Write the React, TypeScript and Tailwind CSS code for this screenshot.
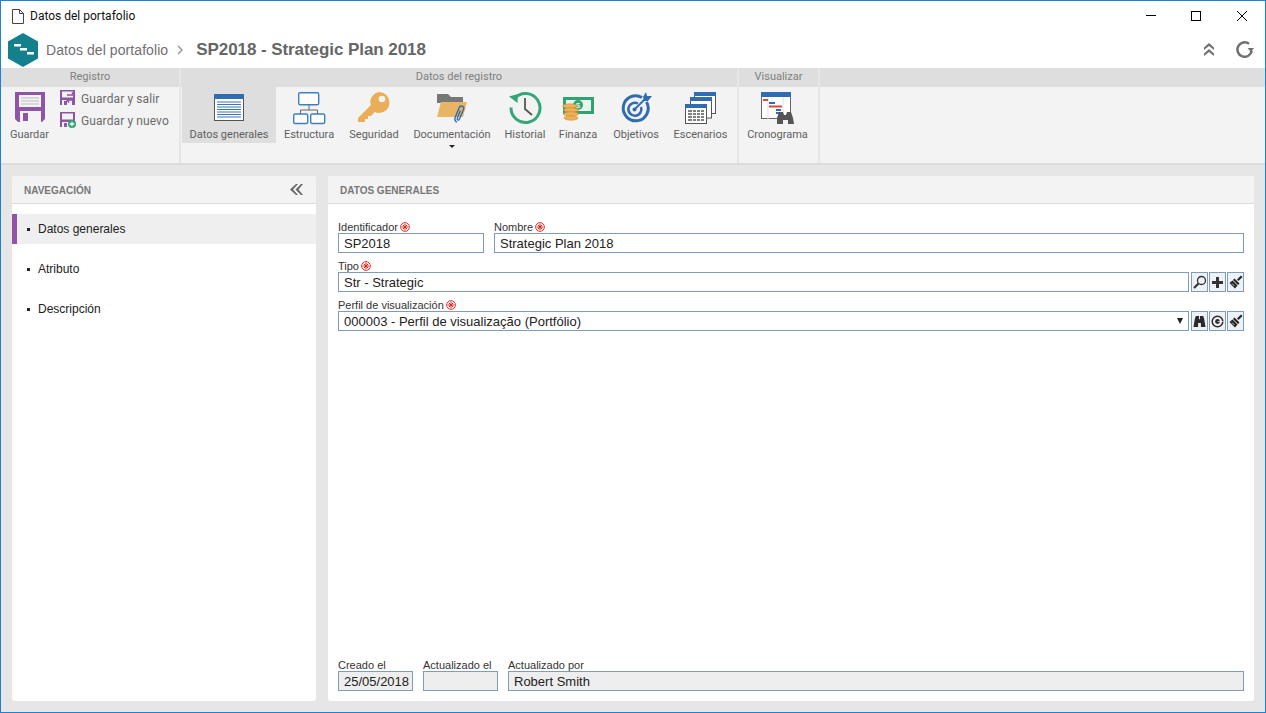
import type { ReactNode } from 'react';

const Req = () => (
  <svg viewBox="0 0 10 10" className="mb-[2px] ml-[2px] h-[10px] w-[10px] shrink-0">
    <circle cx="5" cy="5" r="4.4" fill="#fff" stroke="#e0241b" strokeWidth="0.9" />
    <path d="M5 1.500v7M1.500 5h7M2.800 2.800l4.400 4.400M7.200 2.800l-4.400 4.400" stroke="#e0241b" strokeWidth="1" />
  </svg>
);

const SaveIcon = () => (
  <svg viewBox="0 0 30 30" className="h-[30px] w-[30px]">
    <path d="M0 0h30v27l-3 3H3l-3-3z" fill="#8e54a5" />
    <rect x="4" y="3" width="22" height="12" fill="#f3f3f3" />
    <path d="M6 6h18M6 9h18M6 12h18" stroke="#b9b9c4" strokeWidth="1" />
    <rect x="5" y="19" width="21" height="11" fill="#f3f3f3" />
    <rect x="8" y="21" width="5" height="8" fill="#8e54a5" />
  </svg>
);

const SmallSave = ({ plus }: { plus?: boolean }) => (
  <svg viewBox="0 0 16 16" className="h-4 w-4">
    <path d="M0 0h15v15H0z" fill="#8e54a5" />
    <rect x="2" y="1.5" width="11" height="6" fill="#f3f3f3" />
    <rect x="2" y="10" width="10" height="5" fill="#f3f3f3" />
    <rect x="4" y="11" width="3" height="4" fill="#8e54a5" />
    {plus ? (
      <>
        <circle cx="12" cy="12" r="4" fill="#2fa36f" />
        <path d="M12 9.700v4.600M9.700 12h4.600" stroke="#fff" strokeWidth="1.300" />
      </>
    ) : (
      <path d="M7 5h7l-2-2.500M14 10H7l2 2.500" fill="none" stroke="#8e54a5" strokeWidth="1.500" />
    )}
  </svg>
);

const GeneralIcon = () => (
  <svg viewBox="0 0 30 27" className="h-[27px] w-[30px]">
    <rect x="0.500" y="0.500" width="29" height="26" fill="#fff" stroke="#555" />
    <rect x="0" y="0" width="30" height="5" fill="#2f6cb0" />
    <path d="M3 8h24M3 10.500h24M3 13h24M3 15.500h24M3 18h24M3 20.500h24M3 23h24" stroke="#3c74b6" strokeWidth="1" />
  </svg>
);

const StructureIcon = () => (
  <svg viewBox="0 0 34 34" className="h-[34px] w-[34px]">
    <g fill="#fff" stroke="#3d7fc0" strokeWidth="1.400">
      <rect x="6.700" y="1.700" width="20" height="12" rx="1.500" />
      <rect x="1.700" y="23" width="14" height="9.500" rx="1.500" />
      <rect x="18.700" y="23" width="14" height="9.500" rx="1.500" />
    </g>
    <path d="M17 14v5M8.500 23v-4h17v4" fill="none" stroke="#666" strokeWidth="1" />
  </svg>
);

const KeyIcon = () => (
  <svg viewBox="0 0 34 34" className="h-[34px] w-[34px]">
    <path
      d="M22 1a10.500 10.500 0 0 1 0 21c-1.500 0-3-.4-4.300-1L14 25h-3v3H8v3H1v-4l13-13c-.5-1.200-.8-2.500-.8-3.700A10.500 10.500 0 0 1 22 1z"
      fill="#e9ae57"
    />
    <circle cx="25" cy="8" r="3.300" fill="#f3f3f3" />
  </svg>
);

const FolderIcon = () => (
  <svg viewBox="0 0 32 32" className="h-[32px] w-[32px]">
    <path d="M1 2h11l3 3h12v6H1z" fill="#777" />
    <path d="M1 24V9h3v-1H1z" fill="#777" />
    <path d="M1 25 5 10h26l-4 15z" fill="#e9b463" />
    <path
      d="M21 30c-2-.5-2.500-2-2-4l4-10c.7-1.800 2-2.300 3.300-1.800 1.400.6 1.800 1.900 1.200 3.300l-4 9.500c-.4 1-1 1.300-1.700 1-.7-.3-.8-.9-.4-1.900l3-7.500"
      fill="none"
      stroke="#2f6cb0"
      strokeWidth="1.400"
    />
  </svg>
);

const HistoryIcon = () => (
  <svg viewBox="0 0 33 33" className="h-[33px] w-[33px]">
    <path d="M5.500 7.500A14.500 14.500 0 1 1 2 16.500" fill="none" stroke="#35a67a" strokeWidth="3" />
    <path d="M0 5.500 9 3l-.5 9z" fill="#35a67a" />
    <path d="M16 7v11l7 6" fill="none" stroke="#555" strokeWidth="1.800" />
  </svg>
);

const MoneyIcon = () => (
  <svg viewBox="0 0 34 30" className="h-[30px] w-[34px]">
    <rect x="2" y="4" width="31" height="17" fill="#2fa36f" />
    <rect x="5" y="7" width="25" height="11" fill="#eaf5ef" />
    <circle cx="17" cy="12" r="5" fill="#2fa36f" />
    <text x="17" y="15" textAnchor="middle" fontSize="8" fill="#fff" fontFamily="Liberation Sans">$</text>
    <g fill="#eeb156" stroke="#c98d36" strokeWidth="0.600">
      <ellipse cx="9" cy="13" rx="7.500" ry="2.200" />
      <ellipse cx="10" cy="17" rx="7.500" ry="2.200" />
      <ellipse cx="10" cy="21" rx="7.500" ry="2.200" />
      <ellipse cx="10" cy="25" rx="7" ry="2.200" />
    </g>
  </svg>
);

const TargetIcon = () => (
  <svg viewBox="0 0 32 32" className="h-[32px] w-[32px]">
    <g fill="none" stroke="#2f6cb0">
      <path d="M22 5.500A12.500 12.500 0 1 0 26.500 10" strokeWidth="3" />
      <path d="M18 11.500A6.500 6.500 0 1 0 21 15" strokeWidth="2.500" />
    </g>
    <circle cx="14.500" cy="17.500" r="2" fill="#2f6cb0" />
    <path d="M14.500 17.500 26 6" stroke="#2f6cb0" strokeWidth="1.800" />
    <path d="m23 5 3-5 1 4 5 0-4 5-4 0z" fill="#2f6cb0" />
  </svg>
);

const ScenarioIcon = () => (
  <svg viewBox="0 0 32 32" className="h-[32px] w-[32px]">
    <rect x="9.500" y="0.500" width="21" height="21" fill="#fff" stroke="#555" />
    <rect x="9" y="0" width="22" height="4" fill="#2f6cb0" />
    <rect x="5.500" y="6" width="21" height="20" fill="#fff" stroke="#555" />
    <rect x="5" y="5" width="22" height="4" fill="#2f6cb0" />
    <rect x="0.500" y="12.500" width="21" height="19" fill="#fff" stroke="#555" />
    <rect x="0" y="12" width="22" height="4" fill="#2f6cb0" />
    <path d="M3 19h16M3 22h16M3 25h16M3 28h16" stroke="#555" strokeWidth="1.500" />
    <path d="M7.500 18v11M11.500 18v11M15.500 18v11" stroke="#fff" strokeWidth="1" />
  </svg>
);

const GanttIcon = () => (
  <svg viewBox="0 0 34 32" className="h-[32px] w-[34px]">
    <rect x="0.500" y="0.500" width="29" height="26" fill="#fff" stroke="#666" />
    <rect x="0" y="0" width="30" height="5" fill="#2f6cb0" />
    <path d="M7 5v22M22 5v22" stroke="#ddd" />
    <rect x="2" y="7" width="5" height="2" fill="#d9483b" />
    <rect x="8" y="10" width="6" height="2" fill="#2f6cb0" />
    <rect x="8" y="13.500" width="13" height="2" fill="#d9483b" />
    <rect x="15" y="17" width="5" height="2" fill="#2f6cb0" />
    <rect x="15" y="20" width="3" height="2" fill="#2f6cb0" />
    <path d="M16 32v-6l2-6h4l1 3h2l1-3h4l2 6 1 6h-6v-4h-5v4z" fill="#555" />
  </svg>
);

const Lens = () => (
  <svg viewBox="0 0 14 14" className="h-[14px] w-[14px]">
    <circle cx="8.500" cy="5.500" r="4" fill="none" stroke="#333" strokeWidth="1.300" />
    <path d="M5.500 8.500 1 13" stroke="#333" strokeWidth="2.200" />
  </svg>
);

const PlusIcon = () => (
  <svg viewBox="0 0 11 11" className="h-[11px] w-[11px]">
    <path d="M4 0h3v4h4v3H7v4H4V7H0V4h4z" fill="#333" />
  </svg>
);

const Binoculars = () => (
  <svg viewBox="0 0 14 14" className="h-[13px] w-[13px]">
    <path d="M0.500 13 2 4l1-3h3.500v3.500h1V1H11l1 3 1.500 9H8.500V8.500h-3V13z" fill="#2a2a2a" />
  </svg>
);

const Brush = () => (
  <svg viewBox="0 0 14 14" className="h-[14px] w-[14px]">
    <path d="m8 4.500 4-4 1.500 1.500-4 4z" fill="#222" />
    <path d="M5.500 3.500 10.500 8.500 9 10 4 5z" fill="#222" />
    <path d="M3.500 5.500 8.500 10.500 6 13.500 .5 8z" fill="#222" />
    <path d="m3 8.500 2.500 2.500" stroke="#eef2f6" strokeWidth="0.800" />
  </svg>
);

const Target2 = () => (
  <svg viewBox="0 0 14 14" className="h-[13px] w-[13px]">
    <circle cx="7" cy="7" r="5.700" fill="none" stroke="#2a2a2a" strokeWidth="1.600" />
    <circle cx="7" cy="7" r="2.600" fill="#2a2a2a" />
    <path d="M7 7h6.500" stroke="#eef2f6" strokeWidth="0.800" />
  </svg>
);

const RibbonItem = ({ label, icon, className, active, caret }: { label: string; icon: ReactNode; className: string; active?: boolean; caret?: boolean }) => (
  <div className={`relative flex h-[56px] flex-col items-center ${active ? 'bg-[#dedede]' : ''} ${className}`}>
    <div className="flex h-[36px] items-center justify-center pt-[5px]">{icon}</div>
    <span className="mt-[5px] whitespace-nowrap text-[11px] leading-[13px] text-[#5f5f5f]">{label}</span>
    {caret && <span className="absolute top-[58px] h-0 w-0 border-x-[3px] border-t-[3px] border-x-transparent border-t-[#222]" />}
  </div>
);

const Group = ({ title, className, children }: { title: string; className?: string; children?: ReactNode }) => (
  <div className={`flex flex-col border-r-2 border-[#e6e6e6] ${className ?? ''}`}>
    <div className="h-[19px] bg-[#dedede] text-center text-[11px] leading-[17px] text-[#808080]">{title}</div>
    <div className="flex flex-1">{children}</div>
  </div>
);

const IconBtn = ({ children }: { children: ReactNode }) => (
  <div className="flex h-[20px] w-[17px] items-center justify-center border border-[#7f9db9] bg-[#eef2f6]">{children}</div>
);

const Field = ({ label, req, value, className, gray, caret }: { label: string; req?: boolean; value?: string; className?: string; gray?: boolean; caret?: boolean }) => (
  <div className={className}>
    <div className="-mb-[1px] flex h-[13px] items-center text-[11px] leading-[13px] text-[#333]">
      {label}
      {req && <Req />}
    </div>
    <div className={`flex h-[20px] items-center justify-between border border-[#7f9db9] pl-[5px] pr-[5px] text-[13px] text-[#222] ${gray ? 'bg-[#eeeeee]' : 'bg-white'}`}>
      <span className="whitespace-nowrap pt-[1px]">{value}</span>
      {caret && <span className="h-0 w-0 border-x-[3.5px] border-t-[6px] border-x-transparent border-t-[#222]" />}
    </div>
  </div>
);

const NavItem = ({ label, active }: { label: string; active?: boolean }) => (
  <div className={`mb-[10px] flex h-[30px] items-center ${active ? 'border-l-[5px] border-[#8e54a5] bg-[#efefef] pl-[10px]' : 'pl-[15px]'}`}>
    <span className="mr-[8px] h-[3px] w-[3px] bg-[#222]" />
    <span className="text-[12px] text-[#222]">{label}</span>
  </div>
);

export default function App() {
  return (
    <div className="flex h-[713px] w-[1266px] flex-col overflow-hidden border border-[#1883d7] bg-[#e6e6e6] font-['Liberation_Sans',sans-serif]">
      {/* Title bar */}
      <div className="flex h-[30px] shrink-0 items-center bg-white">
        <svg viewBox="0 0 12 15" className="ml-[11px] h-[15px] w-[12px]">
          <path d="M.5.500h7l4 4v10H.5zM7.500.500v4h4" fill="none" stroke="#444" />
        </svg>
        <span className="ml-[6px] font-['Roboto',sans-serif] text-[12px] text-[#111]">Datos del portafolio</span>
        <div className="ml-auto flex items-center pb-[1px] text-black">
          <div className="mr-[35px] h-[1px] w-[10px] bg-black" />
          <div className="mr-[36px] h-[10px] w-[10px] border border-black" />
          <svg viewBox="0 0 10 10" className="mr-[18px] h-[10px] w-[10px]">
            <path d="M0 0l10 10M10 0 0 10" stroke="#000" strokeWidth="1" />
          </svg>
        </div>
      </div>

      {/* Header */}
      <div className="flex h-[37px] shrink-0 items-center bg-white">
        <svg viewBox="0 0 30 34" className="ml-[7px] h-[34px] w-[30px]">
          <path d="M15 0 30 8.500v17L15 34 0 25.500v-17z" fill="#14808c" />
          <path d="M6 11h7v2.500H6zM12 15h7v2.500h-7zM19 19h7v2.500h-7z" fill="#fff" />
        </svg>
        <span className="ml-[8px] pt-[1px] text-[14px] tracking-[0.08px] text-[#707070]">Datos del portafolio</span>
        <svg viewBox="0 0 6 10" className="ml-[9px] h-[10px] w-[6px]">
          <path d="m1 1 4 4-4 4" fill="none" stroke="#999" strokeWidth="1.500" />
        </svg>
        <span className="ml-[13px] text-[17px] font-bold tracking-[-0.07px] text-[#666]">SP2018 - Strategic Plan 2018</span>
        <div className="ml-auto flex items-center">
          <svg viewBox="0 0 12 13" className="mr-[21px] h-[13px] w-[12px]">
            <path d="M6 0l5 4.500V7L6 3 1 7V4.500zM6 6l5 4.500V13L6 9l-5 4v-2.500z" fill="#707070" />
          </svg>
          <svg viewBox="0 0 20 20" className="mb-[2px] mr-[11px] h-[18px] w-[18px]">
            <path d="M14.500 4.300A8 8 0 1 0 17.500 12" fill="none" stroke="#707070" strokeWidth="2.800" />
            <path d="M13 9h7l-3.500 4.500z" fill="#707070" />
          </svg>
        </div>
      </div>

      {/* Ribbon */}
      <div className="flex h-[97px] shrink-0 border-b-2 border-[#dcdcdc] bg-[#f3f3f3] font-['Roboto',sans-serif]">
        <Group title="Registro" className="w-[180px]">
          <div className="flex w-[57px] flex-col items-center pt-[5px]">
            <SaveIcon />
            <span className="mt-[6px] text-[11px] leading-[13px] text-[#5f5f5f]">Guardar</span>
          </div>
          <div className="flex flex-col gap-[6px] pl-[2px] pt-[3px]">
            <div className="flex h-[16px] items-center gap-[5px]">
              <SmallSave />
              <span className="pt-[2px] text-[12px] tracking-[0.1px] text-[#6b6b6b]">Guardar y salir</span>
            </div>
            <div className="flex h-[16px] items-center gap-[5px]">
              <SmallSave plus />
              <span className="pt-[2px] text-[12px] tracking-[0.1px] text-[#6b6b6b]">Guardar y nuevo</span>
            </div>
          </div>
        </Group>
        <Group title="Datos del registro" className="w-[558px]">
          <div className="flex pl-[1px]">
            <RibbonItem label="Datos generales" icon={<GeneralIcon />} active className="w-[94px]" />
            <RibbonItem label="Estructura" icon={<StructureIcon />} className="w-[66px]" />
            <RibbonItem label="Seguridad" icon={<KeyIcon />} className="w-[64px]" />
            <RibbonItem label="Documentación" icon={<FolderIcon />} caret className="w-[92px]" />
            <RibbonItem label="Historial" icon={<HistoryIcon />} className="w-[54px]" />
            <RibbonItem label="Finanza" icon={<MoneyIcon />} className="w-[52px]" />
            <RibbonItem label="Objetivos" icon={<TargetIcon />} className="w-[64px]" />
            <RibbonItem label="Escenarios" icon={<ScenarioIcon />} className="w-[65px]" />
          </div>
        </Group>
        <Group title="Visualizar" className="w-[81px]">
          <RibbonItem label="Cronograma" icon={<GanttIcon />} className="w-[77px]" />
        </Group>
        <div className="flex-1">
          <div className="h-[19px] bg-[#dedede]" />
        </div>
      </div>

      {/* Body */}
      <div className="flex min-h-0 flex-1 gap-[12px] px-[11px] pb-[11px] pt-[11px]">
        <div className="flex w-[304px] flex-col rounded-[3px] bg-white">
          <div className="flex h-[28px] items-center justify-between rounded-t-[3px] border-b border-[#dcdcdc] bg-[#f3f3f3] pl-[12px] pr-[13px]">
            <span className="pt-[1px] text-[10px] font-bold text-[#777]">NAVEGACIÓN</span>
            <svg viewBox="0 0 13 11" className="h-[11px] w-[13px]">
              <path d="M6 0 0 5.500 6 11h2L3 5.500 8 0zM11 0 5.500 5.500 11 11h2L8.500 5.500 13 0z" fill="#666" />
            </svg>
          </div>
          <div className="pt-[10px]">
            <NavItem label="Datos generales" active />
            <NavItem label="Atributo" />
            <NavItem label="Descripción" />
          </div>
        </div>

        <div className="flex flex-1 flex-col rounded-[3px] bg-white">
          <div className="flex h-[28px] items-center rounded-t-[3px] border-b border-[#dcdcdc] bg-[#f3f3f3] pl-[12px]">
            <span className="pt-[1px] text-[10px] font-bold text-[#777]">DATOS GENERALES</span>
          </div>
          <div className="flex flex-1 flex-col px-[10px] pb-[10px] pt-[17px]">
            <div className="flex gap-[10px]">
              <Field label="Identificador" req value="SP2018" className="w-[146px]" />
              <Field label="Nombre" req value="Strategic Plan 2018" className="flex-1" />
            </div>
            <div className="mt-[7px] flex items-end gap-[2px]">
              <Field label="Tipo" req value="Str - Strategic" className="flex-1" />
              <div className="flex gap-[1px]">
                <IconBtn><Lens /></IconBtn>
                <IconBtn><PlusIcon /></IconBtn>
                <IconBtn><Brush /></IconBtn>
              </div>
            </div>
            <div className="mt-[7px] flex items-end gap-[2px]">
              <Field label="Perfil de visualización" req value="000003 - Perfil de visualização (Portfólio)" caret className="flex-1" />
              <div className="flex gap-[1px]">
                <IconBtn><Binoculars /></IconBtn>
                <IconBtn><Target2 /></IconBtn>
                <IconBtn><Brush /></IconBtn>
              </div>
            </div>
            <div className="mt-auto flex gap-[10px]">
              <Field label="Creado el" value="25/05/2018" gray className="w-[75px]" />
              <Field label="Actualizado el" gray className="w-[75px]" />
              <Field label="Actualizado por" value="Robert Smith" gray className="flex-1" />
            </div>
          </div>
        </div>
      </div>
    </div>
  );
}
